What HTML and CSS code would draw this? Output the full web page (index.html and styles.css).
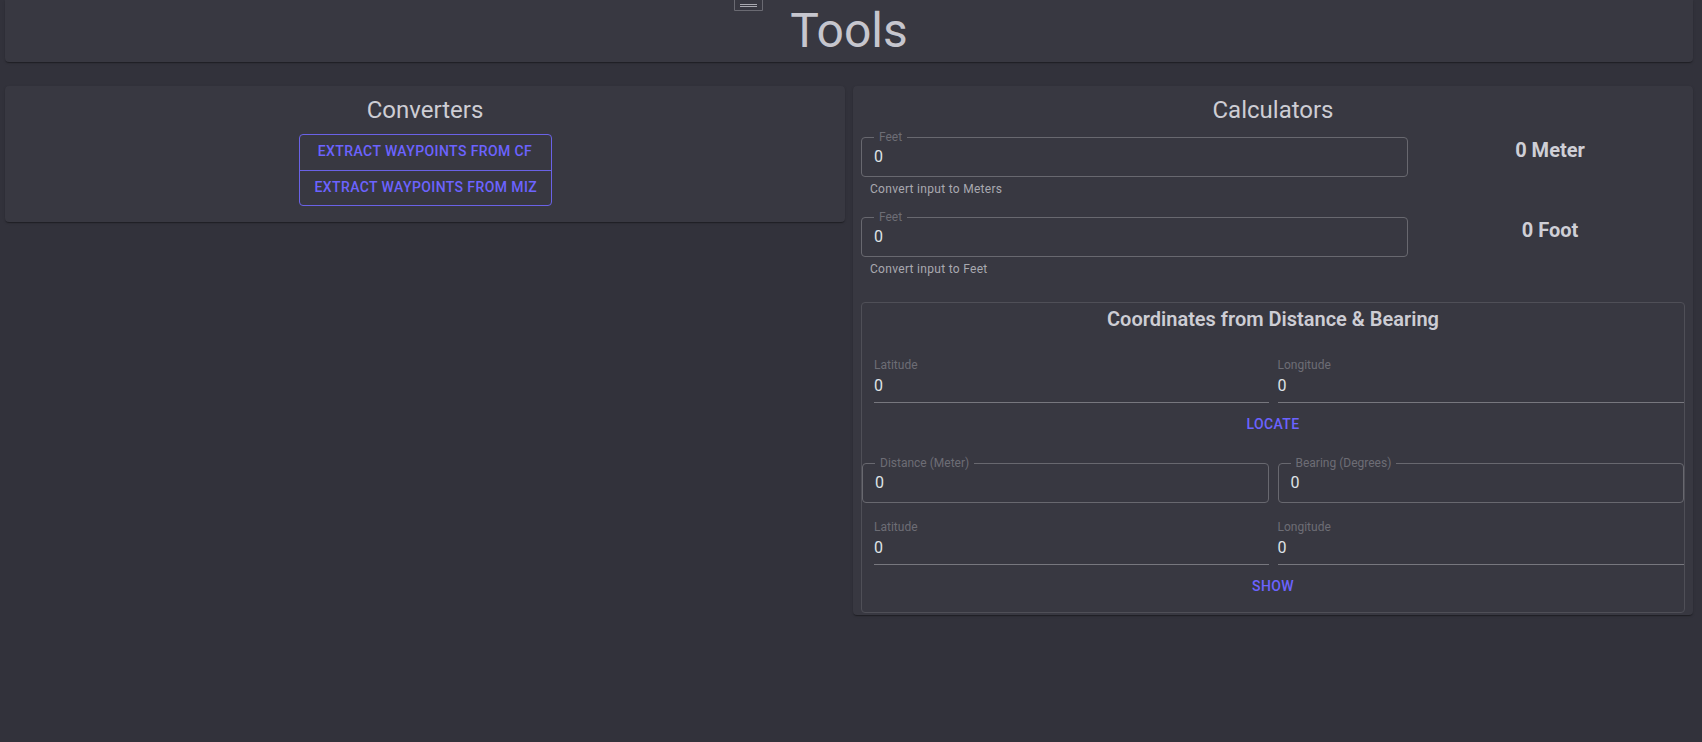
FILE: index.html
```html
<!DOCTYPE html>
<html lang="en">
<head>
<meta charset="utf-8">
<title>Tools</title>
<link rel="stylesheet" href="styles.css">
</head>
<body>
<header class="topbar">
  <span class="menu-toggle">
    <svg width="29" height="11" viewBox="0 0 29 11" aria-hidden="true">
      <path d="M0.5 0 V10.5 H28.5 V0" fill="none" stroke="#6a6a72" stroke-width="1"/>
      <path d="M6 4.5 H23 M6 6.5 H23" stroke="#a9a9b0" stroke-width="1"/>
    </svg>
  </span>
  <h1 class="page-title">Tools</h1>
</header>

<main class="layout">
  <section class="card converters">
    <h2 class="card-title">Converters</h2>
    <div class="btn-group">
      <button class="btn-outlined">Extract waypoints from CF</button>
      <button class="btn-outlined">Extract waypoints from MIZ</button>
    </div>
  </section>

  <section class="card calculators">
    <h2 class="card-title">Calculators</h2>
    <div class="unit-grid">
      <div class="unit-field">
        <div class="outlined">
          <span class="outlined-label">Feet</span>
          <span class="input-value">0</span>
        </div>
        <p class="helper">Convert input to Meters</p>
      </div>
      <div class="unit-result">0 Meter</div>

      <div class="unit-field">
        <div class="outlined">
          <span class="outlined-label">Feet</span>
          <span class="input-value">0</span>
        </div>
        <p class="helper">Convert input to Feet</p>
      </div>
      <div class="unit-result">0 Foot</div>
    </div>

    <div class="coord-box">
      <h3 class="coord-title">Coordinates from Distance &amp; Bearing</h3>

      <div class="pair-row first-pair">
        <div class="std-field indent">
          <span class="std-label">Latitude</span>
          <span class="std-value">0</span>
        </div>
        <div class="std-field">
          <span class="std-label">Longitude</span>
          <span class="std-value">0</span>
        </div>
      </div>
      <div class="text-btn-row"><button class="btn-text">Locate</button></div>

      <div class="pair-row outlined-pair">
        <div class="outlined">
          <span class="outlined-label">Distance (Meter)</span>
          <span class="input-value">0</span>
        </div>
        <div class="outlined">
          <span class="outlined-label">Bearing (Degrees)</span>
          <span class="input-value">0</span>
        </div>
      </div>

      <div class="pair-row second-pair">
        <div class="std-field indent">
          <span class="std-label">Latitude</span>
          <span class="std-value">0</span>
        </div>
        <div class="std-field">
          <span class="std-label">Longitude</span>
          <span class="std-value">0</span>
        </div>
      </div>
      <div class="text-btn-row"><button class="btn-text">Show</button></div>
    </div>
  </section>
</main>
</body>
</html>
```

FILE: styles.css
```css
* { box-sizing: border-box; }

html, body {
  margin: 0;
  padding: 0;
}

body {
  background: #32323b;
  color: #d0d0d6;
  font-family: Roboto, "Liberation Sans", Arial, sans-serif;
  height: 742px;
  overflow: hidden;
}

.topbar {
  position: relative;
  margin: 0 9px 0 5px;
  height: 62px;
  padding-top: 3px;
  background: #383841;
  border-radius: 0 0 4px 4px;
  box-shadow: 0 2px 1px -1px rgba(0,0,0,0.2), 0 1px 1px 0 rgba(0,0,0,0.14), 0 1px 3px 0 rgba(0,0,0,0.12);
  text-align: center;
}

.menu-toggle {
  position: absolute;
  left: 729px;
  top: 0;
  width: 29px;
  height: 11px;
  display: block;
}
.menu-toggle svg { display: block; }

.page-title {
  margin: 0;
  font-size: 48px;
  line-height: 56px;
  font-weight: 400;
  color: #c6c6ce;
}

.layout {
  display: grid;
  grid-template-columns: 840px 840px;
  column-gap: 8px;
  align-items: start;
  padding: 24px 9px 0 5px;
}

.card {
  background: #383841;
  border-radius: 4px;
  box-shadow: 0 2px 1px -1px rgba(0,0,0,0.2), 0 1px 1px 0 rgba(0,0,0,0.14), 0 1px 3px 0 rgba(0,0,0,0.12);
  padding: 8px;
}

.converters {
  padding-bottom: 16px;
  text-align: center;
}

.calculators {
  padding-bottom: 2px;
}

.card-title {
  margin: 0;
  font-size: 24px;
  line-height: 32px;
  font-weight: 400;
  color: #cdcdd4;
  text-align: center;
}

.btn-group {
  display: inline-flex;
  flex-direction: column;
  vertical-align: top;
  margin-top: 8px;
  border: 1px solid #6a62e6;
  border-radius: 4px;
  width: 253px;
}

.btn-outlined {
  height: 35px;
  padding: 0 15px 3px;
  background: transparent;
  border: 0;
  color: #6c63ff;
  font-family: Roboto, "Liberation Sans", Arial, sans-serif;
  font-size: 14px;
  font-weight: 500;
  letter-spacing: 0.4px;
  text-transform: uppercase;
  white-space: nowrap;
  cursor: pointer;
}
.btn-outlined + .btn-outlined {
  border-top: 1px solid #6a62e6;
  padding-bottom: 2px;
}

.unit-grid {
  display: grid;
  grid-template-columns: 547px 1fr;
  column-gap: 7px;
  row-gap: 18px;
  margin-top: 11px;
}

.unit-result {
  padding-top: 1px;
  font-size: 20px;
  line-height: 24px;
  font-weight: 700;
  color: #cfcfd6;
  text-align: center;
}

.outlined {
  position: relative;
  height: 40px;
  border: 1px solid #68686f;
  border-radius: 4px;
  padding: 0 12px;
  display: flex;
  align-items: center;
}

.outlined-label {
  position: absolute;
  top: -7px;
  left: 12px;
  padding: 0 5px;
  background: #383841;
  font-size: 12px;
  line-height: 12px;
  color: #6d6d75;
  white-space: nowrap;
}

.input-value {
  font-size: 16px;
  line-height: 24px;
  color: #dfe3e6;
}

.helper {
  margin: 2px 0 0 9px;
  font-size: 12px;
  line-height: 20px;
  letter-spacing: 0.3px;
  font-weight: 400;
  color: #a9a9b0;
}

.coord-box {
  margin-top: 23px;
  border: 1px solid #4f4f57;
  border-radius: 4px;
  padding-bottom: 9px;
}

.coord-title {
  margin: 0;
  font-size: 20px;
  line-height: 32px;
  font-weight: 600;
  color: #cdcdd4;
  text-align: center;
}

.pair-row {
  display: grid;
  grid-template-columns: 1fr 1fr;
  column-gap: 9px;
}

.first-pair { margin-top: 22px; }
.outlined-pair { margin-top: 22px; }
.second-pair { margin-top: 16px; }

.std-field {
  display: flex;
  flex-direction: column;
  border-bottom: 1px solid #77777e;
  padding-bottom: 5px;
}
.std-field.indent { margin-left: 12px; }

.std-label {
  font-size: 12px;
  line-height: 16px;
  color: #6d6d75;
}

.std-value {
  font-size: 16px;
  line-height: 24px;
  padding-top: 1px;
  margin-bottom: -1px;
  color: #dfe3e6;
}

.text-btn-row {
  display: flex;
  justify-content: center;
  margin-top: 2px;
}

.btn-text {
  height: 36px;
  padding: 7px 8px 5px;
  background: transparent;
  border: 0;
  color: #6c63ff;
  font-family: Roboto, "Liberation Sans", Arial, sans-serif;
  font-size: 14px;
  line-height: 24px;
  font-weight: 500;
  letter-spacing: 0.4px;
  text-transform: uppercase;
  cursor: pointer;
}
```
